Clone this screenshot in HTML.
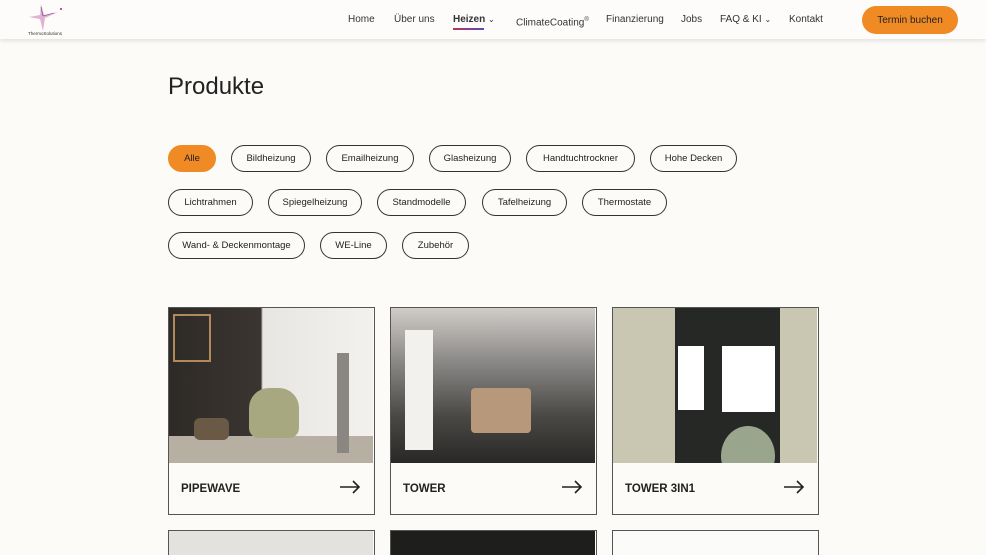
<!DOCTYPE html>
<html><head><meta charset="utf-8"><style>
*{margin:0;padding:0;box-sizing:border-box}
html,body{width:986px;height:555px;overflow:hidden}
body{background:#fcfbf8;font-family:"Liberation Sans",sans-serif;color:#222;position:relative}
.hdr{position:absolute;left:0;top:0;width:986px;height:39px;background:#fdfcfa;box-shadow:0 2px 4px rgba(0,0,0,.1)}
.nav{position:absolute;top:14px;font-size:10px;line-height:12px;color:#333;white-space:nowrap}
.btn{position:absolute;left:862px;top:6px;width:96px;height:28px;border-radius:14px;background:#f08a24;color:#222;font-size:10px;display:flex;align-items:center;justify-content:center}
h1{position:absolute;left:168px;top:73px;font-size:24px;line-height:28px;font-weight:normal;color:#222}
.p{position:absolute;height:27px;border:1.5px solid #333;border-radius:14px;font-size:9.5px;display:flex;align-items:center;justify-content:center;color:#222;white-space:nowrap}
.p.a{background:#f08a24;border-color:#f08a24}
.c{position:absolute;width:207px;height:208px;border:1.5px solid #555;background:#fcfbf8;overflow:hidden}
.c .im{position:absolute;left:0;top:0;width:204px;height:155px;overflow:hidden}
.c .t{position:absolute;left:12px;top:174px;font-size:11.5px;font-weight:bold;line-height:14px}
.c .ar{position:absolute;right:13px;top:172px}
.c.b{height:25px;border-bottom:none}
</style></head><body>
<div class="hdr">
<svg style="position:absolute;left:28px;top:3px" width="40" height="30" viewBox="0 0 40 30"><path d="M13 1 L16 12 L30 9 L17 15 L15 28 L12 16 L1 14 L12 12 Z" fill="#d9a0c8" opacity=".8"/><path d="M13 4 L15 13 L26 10" stroke="#7a3a8a" fill="none" stroke-width=".6"/><circle cx="33" cy="6" r="1" fill="#a03060"/></svg>
<div style="position:absolute;left:28px;top:31px;font-size:4.5px;color:#333">ThermoSolutions</div>
<div class="nav" style="left:348px">Home</div>
<div class="nav" style="left:394px">Über uns</div>
<div class="nav" style="left:453px;font-weight:bold">Heizen <span style="font-weight:normal;font-size:8px">⌄</span></div>
<div style="position:absolute;left:453px;top:28px;width:31px;height:2px;background:linear-gradient(90deg,#c03050,#5050c0)"></div>
<div class="nav" style="left:516px">ClimateCoating<sup style="font-size:6px">®</sup></div>
<div class="nav" style="left:606px">Finanzierung</div>
<div class="nav" style="left:681px">Jobs</div>
<div class="nav" style="left:720px">FAQ &amp; KI <span style="font-size:8px">⌄</span></div>
<div class="nav" style="left:789px">Kontakt</div>
<div class="btn">Termin buchen</div>
</div>
<h1>Produkte</h1>
<div class="p a" style="left:168px;top:145px;width:48px">Alle</div>
<div class="p" style="left:231px;top:145px;width:80px">Bildheizung</div>
<div class="p" style="left:326px;top:145px;width:88px">Emailheizung</div>
<div class="p" style="left:429px;top:145px;width:82px">Glasheizung</div>
<div class="p" style="left:526px;top:145px;width:109px">Handtuchtrockner</div>
<div class="p" style="left:650px;top:145px;width:87px">Hohe Decken</div>
<div class="p" style="left:168px;top:189px;width:85px">Lichtrahmen</div>
<div class="p" style="left:268px;top:189px;width:94px">Spiegelheizung</div>
<div class="p" style="left:377px;top:189px;width:89px">Standmodelle</div>
<div class="p" style="left:482px;top:189px;width:85px">Tafelheizung</div>
<div class="p" style="left:582px;top:189px;width:85px">Thermostate</div>
<div class="p" style="left:168px;top:232px;width:137px">Wand- &amp; Deckenmontage</div>
<div class="p" style="left:320px;top:232px;width:67px">WE-Line</div>
<div class="p" style="left:402px;top:232px;width:67px">Zubehör</div>

<div class="c" style="left:168px;top:307px"><div class="im" style="background:linear-gradient(90deg,#2e2a27 0,#3a3531 45%,#e8e6e2 46%,#f2f1ee 100%)">
<div style="position:absolute;left:4px;top:6px;width:38px;height:48px;border:2px solid #b08a5a"></div>
<div style="position:absolute;left:0;top:128px;width:204px;height:27px;background:#b8afa3"></div>
<div style="position:absolute;left:80px;top:80px;width:50px;height:50px;border-radius:40% 40% 20% 20%;background:#a8a880"></div>
<div style="position:absolute;left:168px;top:45px;width:12px;height:100px;background:#8a8782"></div>
<div style="position:absolute;left:25px;top:110px;width:35px;height:22px;border-radius:6px;background:#6a5a45"></div></div>
<div class="t">PIPEWAVE</div><svg class="ar" width="22" height="14" viewBox="0 0 22 14"><path d="M1 7H20M14 1L20 7L14 13" stroke="#222" stroke-width="1.6" fill="none"/></svg></div>

<div class="c" style="left:390px;top:307px"><div class="im" style="background:linear-gradient(180deg,#d0ccc8 0,#8a8886 35%,#4a4845 70%,#2a2826 100%)">
<div style="position:absolute;left:14px;top:22px;width:28px;height:120px;background:#f2f1ee"></div>
<div style="position:absolute;left:80px;top:80px;width:60px;height:45px;background:#b8987a;border-radius:4px"></div></div>
<div class="t">TOWER</div><svg class="ar" width="22" height="14" viewBox="0 0 22 14"><path d="M1 7H20M14 1L20 7L14 13" stroke="#222" stroke-width="1.6" fill="none"/></svg></div>

<div class="c" style="left:612px;top:307px"><div class="im" style="background:#c9c6b2">
<div style="position:absolute;left:62px;top:0;width:105px;height:155px;background:#262826"></div>
<div style="position:absolute;left:65px;top:38px;width:26px;height:64px;background:#fff"></div>
<div style="position:absolute;left:109px;top:38px;width:53px;height:66px;background:#fff"></div>
<div style="position:absolute;left:108px;top:118px;width:54px;height:60px;border-radius:50%;background:#9aa58e"></div></div>
<div class="t">TOWER 3IN1</div><svg class="ar" width="22" height="14" viewBox="0 0 22 14"><path d="M1 7H20M14 1L20 7L14 13" stroke="#222" stroke-width="1.6" fill="none"/></svg></div>

<div class="c b" style="left:168px;top:530px"><div class="im" style="background:#e4e2de"></div></div>
<div class="c b" style="left:390px;top:530px"><div class="im" style="background:#1e1e1c"></div></div>
<div class="c b" style="left:612px;top:530px"><div class="im" style="background:#fbfbf9"></div></div>
</body></html>
